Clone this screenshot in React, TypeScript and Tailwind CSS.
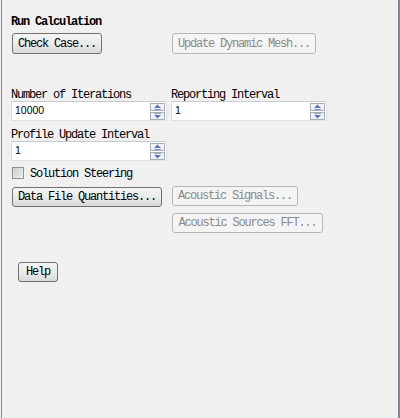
import React from "react";

const mono = "font-[family-name:'Liberation_Mono',monospace] text-[12px] leading-[14px] tracking-[-1.2px]";

type BtnProps = { label: string; w: string; h?: string; disabled?: boolean; className?: string };

const Btn = ({ label, w, h = "h-[20px]", disabled, className = "" }: BtnProps) => (
  <button
    disabled={disabled}
    className={`${w} ${h} ${mono} flex items-center justify-center rounded-[3px] border ${
      disabled
        ? "border-[#b4b8bb] bg-[#f4f4f4] text-[#8a8a8a]"
        : "border-[#707070] bg-gradient-to-b from-[#f4f4f4] via-[#ebebeb] to-[#d9d9d9] text-black"
    } ${className}`}
  >
    {label}
  </button>
);

const Arrow = ({ up }: { up?: boolean }) => (
  <svg width="9" height="6" viewBox="0 0 9 6">
    {up ? (
      <>
        <path d="M4.5 0.5L8 4H1Z" fill="#5b78b8" />
        <rect x="1" y="5" width="7" height="1" fill="#8da2cf" />
      </>
    ) : (
      <>
        <rect x="1" y="0" width="7" height="1" fill="#8da2cf" />
        <path d="M1 2H8L4.5 5.5Z" fill="#5b78b8" />
      </>
    )}
  </svg>
);

const SpinInput = ({ value }: { value: string }) => (
  <div className="w-[156px] h-[20px] flex items-stretch border border-[#dde1e6] border-t-[#c8ccd2] bg-white">
    <div className="flex-1 flex items-center pl-[3px] font-[family-name:'Liberation_Sans',sans-serif] text-[10.5px] text-black">
      {value}
    </div>
    <div className="w-[15px] my-[1px] mr-[1px] flex flex-col gap-[1px]">
      <div className="flex-1 flex items-center justify-center border border-[#a9acb2] bg-[#f1f2f5]">
        <Arrow up />
      </div>
      <div className="flex-1 flex items-center justify-center border border-[#a9acb2] bg-[#f1f2f5]">
        <Arrow />
      </div>
    </div>
  </div>
);

export default function App() {
  return (
    <div className="w-[400px] h-[418px] bg-[#f0f0f0] flex">
      <div className="ml-[1px] w-[1px] bg-[#8b8b8b]" />
      <div className="flex-1 flex flex-col pl-[9px] pt-[15px]">
        <div className={`${mono} h-[12px] font-bold tracking-[-0.2px] text-black`}>Run Calculation</div>

        <div className="grid grid-cols-[160px_1fr] mt-[6px]">
          <Btn label="Check Case..." w="w-[90px]" h="h-[21px]" className="ml-[1px]" />
          <Btn label="Update Dynamic Mesh..." w="w-[144px]" h="h-[21px]" disabled className="ml-[1px]" />
        </div>

        <div className="grid grid-cols-[160px_1fr] mt-[34px]">
          <div className="flex flex-col">
            <div className={`${mono} h-[12px] text-black`}>Number of Iterations</div>
            <div className="mt-[1px]">
              <SpinInput value="10000" />
            </div>
          </div>
          <div className="flex flex-col">
            <div className={`${mono} h-[12px] text-black`}>Reporting Interval</div>
            <div className="mt-[1px]">
              <SpinInput value="1" />
            </div>
          </div>
        </div>

        <div className={`${mono} h-[12px] text-black mt-[7px]`}>Profile Update Interval</div>
        <div className="mt-[1px]">
          <SpinInput value="1" />
        </div>

        <label className="mt-[6px] ml-[1px] h-[12px] flex items-center gap-[6px]">
          <span className="w-[12px] h-[12px] border border-[#8e8f8f] bg-gradient-to-br from-[#d4d4d4] to-[#f4f4f4] p-[1px]">
            <span className="block w-full h-full bg-gradient-to-br from-[#cfcfcf] to-[#ececec]" />
          </span>
          <span className={`${mono} h-[12px] text-black`}>Solution Steering</span>
        </label>

        <div className="grid grid-cols-[160px_1fr] mt-[7px]">
          <Btn label="Data File Quantities..." w="w-[150px]" className="ml-[1px] mt-[1px]" />
          <div className="flex flex-col gap-[7px]">
            <Btn label="Acoustic Signals..." w="w-[126px]" disabled className="ml-[1px]" />
            <Btn label="Acoustic Sources FFT..." w="w-[151px]" disabled className="ml-[1px]" />
          </div>
        </div>

        <Btn label="Help" w="w-[40px]" className="mt-[29px] ml-[7px]" />
      </div>
      <div className="w-[2px] bg-[#7e8893]" />
    </div>
  );
}
